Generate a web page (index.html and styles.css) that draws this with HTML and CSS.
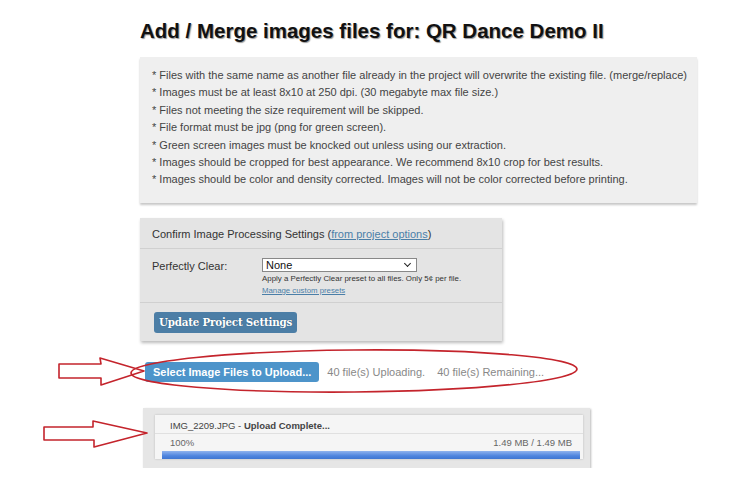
FILE: index.html
```html
<!DOCTYPE html>
<html lang="en">
<head>
    <meta charset="UTF-8">
    <title>Add / Merge images files</title>
    <link rel="stylesheet" href="styles.css">
</head>
<body>
    <div class="page">
        <h1>Add / Merge images files for: QR Dance Demo II</h1>

        <div class="notes">
            <p>* Files with the same name as another file already in the project will overwrite the existing file. (merge/replace)</p>
            <p>* Images must be at least 8x10 at 250 dpi. (30 megabyte max file size.)</p>
            <p>* Files not meeting the size requirement will be skipped.</p>
            <p>* File format must be jpg (png for green screen).</p>
            <p>* Green screen images must be knocked out unless using our extraction.</p>
            <p>* Images should be cropped for best appearance. We recommend 8x10 crop for best results.</p>
            <p>* Images should be color and density corrected. Images will not be color corrected before printing.</p>
        </div>

        <div class="settings">
            <div class="settings-head">Confirm Image Processing Settings (<a href="#">from project options</a>)</div>
            <div class="settings-row">
                <label>Perfectly Clear:</label>
                <div class="field">
                    <div class="select">None<span class="chev"></span></div>
                    <div class="hint">Apply a Perfectly Clear preset to all files. Only 5¢ per file.</div>
                    <a class="hint-link" href="#">Manage custom presets</a>
                </div>
            </div>
            <div class="settings-foot">
                <button class="btn-update">Update Project Settings</button>
            </div>
        </div>

        <div class="upload-bar">
            <button class="btn-select">Select Image Files to Upload...</button>
            <span class="status">40 file(s) Uploading.</span>
            <span class="status">40 file(s) Remaining...</span>
        </div>

        <div class="queue">
            <div class="queue-item">
                <div class="queue-name">IMG_2209.JPG - <b>Upload Complete...</b></div>
                <div class="queue-info">
                    <span>100%</span>
                    <span>1.49 MB / 1.49 MB</span>
                </div>
                <div class="progress"></div>
            </div>
        </div>
    </div>

    <!-- hand drawn annotations -->
    <svg class="marks" width="753" height="480" viewBox="0 0 753 480">
        <ellipse cx="354" cy="371" rx="223" ry="21" fill="none" stroke="#c4242c" stroke-width="1.6" transform="rotate(-0.5 354 371)"/>
        <path d="M59 364 L101 364 L100 358 L144 371 L101 385 L101 378 L59 378 Z" fill="none" stroke="#c4242c" stroke-width="1.6" stroke-linejoin="round"/>
        <path d="M44 427 L93 427 L93 421 L147 433 L94 447 L94 440 L44 440 Z" fill="none" stroke="#c4242c" stroke-width="1.6" stroke-linejoin="round"/>
    </svg>
</body>
</html>
```

FILE: styles.css
```css
* {
    margin: 0;
    padding: 0;
    box-sizing: border-box;
}

body {
    font-family: "Liberation Sans", Arial, sans-serif;
    background-color: #fff;
    color: #444;
    position: relative;
}

.page {
    padding: 20px 0 0 140px;
}

h1 {
    font-size: 20.5px;
    font-weight: bold;
    color: #111;
    line-height: 22px;
    text-shadow: 1px 1px 1px #999;
}

/* info box */
.notes {
    width: 557px;
    margin-top: 15px;
    padding: 10px 0 14px 12px;
    background-color: #efefef;
    box-shadow: 0 2px 2px #c8c8c8;
    font-size: 11px;
    line-height: 17.4px;
    color: #444;
}

/* settings panel */
.settings {
    width: 362px;
    margin-top: 15px;
    background-color: #e4e4e4;
    box-shadow: 1px 2px 3px #bbb;
    font-size: 11px;
    color: #333;
}

.settings a {
    color: #4b7fa8;
}

.settings-head {
    height: 31px;
    padding: 10px 0 0 12px;
    border-bottom: 1px solid #d0d0d0;
}

.settings-row {
    display: flex;
    height: 54px;
    padding: 9px 0 0 12px;
    border-bottom: 1px solid #d0d0d0;
}

.settings-row label {
    width: 110px;
    padding-top: 2px;
}

.select {
    position: relative;
    width: 155px;
    height: 14px;
    padding-left: 3px;
    background-color: #fff;
    border: 1px solid #888;
    font-size: 11px;
    line-height: 12px;
    color: #111;
}

.chev {
    position: absolute;
    right: 6px;
    top: 2px;
    width: 5px;
    height: 5px;
    border-right: 1.5px solid #222;
    border-bottom: 1.5px solid #222;
    transform: rotate(45deg);
}

.hint {
    margin-top: 2px;
    font-size: 7.9px;
    color: #333;
}

.hint-link {
    display: block;
    margin-top: 3px;
    font-size: 7.8px;
}

.settings-foot {
    height: 38px;
    padding: 9px 0 0 14px;
}

.btn-update {
    height: 21px;
    padding: 0 5px;
    background-color: #4c7ea6;
    color: #fff;
    border: none;
    border-radius: 3px;
    font-family: "DejaVu Serif", Georgia, serif;
    font-weight: bold;
    font-size: 10.3px;
    letter-spacing: -0.2px;
    text-shadow: 0 0 1px #2a4c68;
}

/* upload line */
.upload-bar {
    display: flex;
    align-items: center;
    gap: 8px;
    margin: 21px 0 0 5px;
    height: 20px;
}

.btn-select {
    height: 20px;
    padding: 0 8px;
    background-color: #4d94ca;
    color: #fff;
    border: none;
    border-radius: 3px;
    font-family: "Liberation Sans", Arial, sans-serif;
    font-weight: bold;
    font-size: 11px;
}

.status {
    font-size: 11px;
    color: #888;
    margin-right: 4px;
}

/* upload queue */
.queue {
    width: 447px;
    margin: 26px 0 0 3px;
    padding: 7px 7px 6px 12px;
    background-color: #e6e6e6;
    box-shadow: 1px 1px 2px #bbb;
}

.queue-item {
    background-color: #f5f5f5;
    box-shadow: 0 0 2px #bbb;
    font-size: 9.5px;
    color: #444;
}

.queue-name {
    height: 19px;
    padding: 5px 0 0 15px;
    border-bottom: 1px solid #e0e0e0;
}

.queue-info {
    display: flex;
    justify-content: space-between;
    height: 17px;
    padding: 3px 11px 0 15px;
    color: #666;
}

.progress {
    height: 8px;
    margin: 0 3px 3px 7px;
    background: linear-gradient(#8fb3ee, #4f85de 60%, #3f76d2);
}

.marks {
    position: absolute;
    top: 0;
    left: 0;
    pointer-events: none;
}
```
